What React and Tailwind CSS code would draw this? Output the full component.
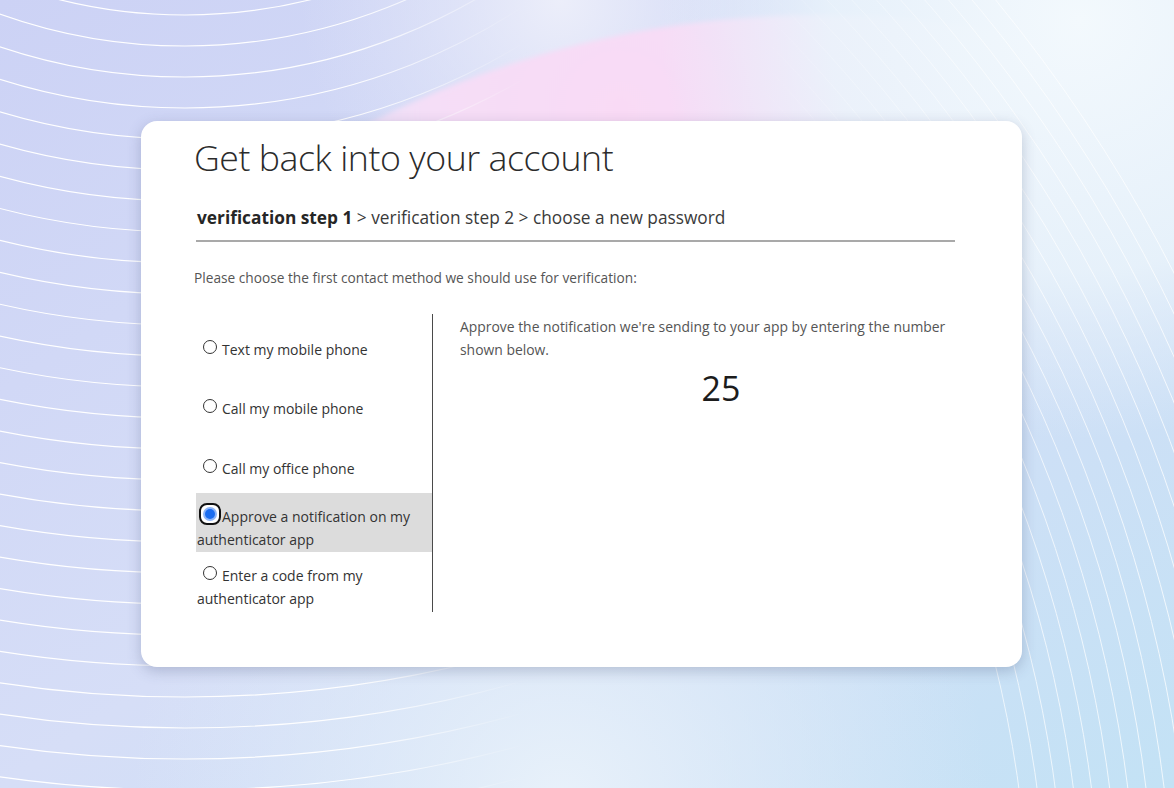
import React from "react";

const options = [
  { id: "sms", label: "Text my mobile phone", h: "h-[59px]" },
  { id: "call", label: "Call my mobile phone", h: "h-[60px]" },
  { id: "office", label: "Call my office phone", h: "h-[48px]" },
  { id: "push", label: "Approve a notification on my authenticator app", h: "h-[59px]" },
  { id: "code", label: "Enter a code from my authenticator app", h: "" },
];

// concentric rings behind the card
const ringsA = Array.from({ length: 27 }, (_, i) => 520 + i * 31);
const ringsB = Array.from({ length: 18 }, (_, i) => 1190 + i * 18);

const Backdrop = () => (
  <svg
    className="absolute inset-0 h-full w-full"
    viewBox="0 0 1174 788"
    preserveAspectRatio="none"
  >
    <defs>
      <linearGradient id="base" x1="0" y1="0" x2="1" y2="1">
        <stop offset="0" stopColor="#ccd2f5" />
        <stop offset="0.5" stopColor="#d6def7" />
        <stop offset="1" stopColor="#c3e2f5" />
      </linearGradient>
      <radialGradient id="haze" cx="560" cy="0" r="260" gradientUnits="userSpaceOnUse">
        <stop offset="0" stopColor="#eceefa" />
        <stop offset="1" stopColor="#e2e6f8" stopOpacity="0" />
      </radialGradient>
      <radialGradient id="glow" cx="1080" cy="20" r="420" gradientUnits="userSpaceOnUse">
        <stop offset="0" stopColor="#f3f9fd" />
        <stop offset="0.6" stopColor="#eaf4fb" stopOpacity="0.85" />
        <stop offset="1" stopColor="#e4f0fa" stopOpacity="0" />
      </radialGradient>
      <radialGradient id="pink" cx="620" cy="110" r="470" gradientUnits="userSpaceOnUse">
        <stop offset="0" stopColor="#f9daf5" />
        <stop offset="0.4" stopColor="#f5def7" />
        <stop offset="0.72" stopColor="#e9e5f8" stopOpacity="0.75" />
        <stop offset="1" stopColor="#dfe6f8" stopOpacity="0" />
      </radialGradient>
      <radialGradient id="floor" cx="560" cy="800" r="430" gradientUnits="userSpaceOnUse">
        <stop offset="0" stopColor="#e8f1fa" />
        <stop offset="1" stopColor="#e2ecf9" stopOpacity="0" />
      </radialGradient>
      <linearGradient id="fadeA" x1="0" y1="0" x2="1174" y2="0" gradientUnits="userSpaceOnUse">
        <stop offset="0" stopColor="#fff" stopOpacity="1" />
        <stop offset="0.3" stopColor="#fff" stopOpacity="0.95" />
        <stop offset="0.45" stopColor="#fff" stopOpacity="0" />
      </linearGradient>
      <linearGradient id="fadeB" x1="760" y1="0" x2="1174" y2="0" gradientUnits="userSpaceOnUse">
        <stop offset="0" stopColor="#fff" stopOpacity="0" />
        <stop offset="0.6" stopColor="#fff" stopOpacity="0.9" />
        <stop offset="1" stopColor="#fff" stopOpacity="1" />
      </linearGradient>
      <mask id="maskA">
        <rect width="1174" height="788" fill="url(#fadeA)" />
      </mask>
      <mask id="maskB">
        <rect width="1174" height="788" fill="url(#fadeB)" />
      </mask>
      <filter id="soft">
        <feGaussianBlur stdDeviation="2.5" />
      </filter>
    </defs>
    <rect width="1174" height="788" fill="url(#base)" />
    <rect width="1174" height="788" fill="url(#floor)" />
    <rect width="1174" height="788" fill="url(#haze)" />
    <circle cx="820" cy="1010" r="995" fill="url(#pink)" filter="url(#soft)" />
    <rect width="1174" height="788" fill="url(#glow)" />
    <g mask="url(#maskA)" fill="none" stroke="#ffffff" strokeWidth="1.2">
      {ringsA.map((r) => (
        <circle key={r} cx="185" cy="-505" r={r} />
      ))}
    </g>
    <g mask="url(#maskB)" fill="none" stroke="#ffffff" strokeWidth="1" opacity="0.75">
      {ringsB.map((r) => (
        <circle key={r} cx="-160" cy="950" r={r} />
      ))}
    </g>
  </svg>
);

const Radio = ({ checked }) =>
  checked ? (
    <span className="-my-[5px] ml-[2px] mr-[1px] inline-block h-[22px] w-[22px] rounded-[8px] border-2 border-[#111] bg-white align-[3px]">
      <span className="flex h-full w-full items-center justify-center">
        <span className="flex h-[14px] w-[14px] items-center justify-center rounded-full bg-[#8db4f7]">
          <span className="h-[10px] w-[10px] rounded-full bg-[#1a6cf0]" />
        </span>
      </span>
    </span>
  ) : (
    <span className="ml-[6px] mr-[5px] inline-block h-[14px] w-[14px] rounded-full border border-[#333] bg-white align-[1px]" />
  );

export default function App() {
  return (
    <div
      className="relative h-[788px] w-full overflow-hidden bg-[#d2dbf6]"
      style={{ fontFamily: '"Open Sans", "Noto Sans", sans-serif' }}
    >
      <Backdrop />
      <div className="relative pl-[141px] pt-[121px]">
        <div className="h-[546px] w-[881px] rounded-[16px] bg-white pl-[53px] pr-[67px] pt-[14px] shadow-[0_4px_14px_rgba(70,80,120,0.28)]">
          <h1 className="text-[35.7px] font-light leading-[44px] tracking-[-0.45px] text-[#2b2b2b]">
            Get back into your account
          </h1>

          <div className="ml-[2px] mt-[27px] border-b-2 border-[#a9a9a9] pb-[10px] pl-[1px] text-[17.3px] leading-[24px] text-[#3a3a3a]">
            <span className="font-bold text-[#262626]">verification step 1</span>
            {" > verification step 2 > choose a new password"}
          </div>

          <p className="mt-[26px] text-[13.7px] leading-[20px] text-[#555]">
            Please choose the first contact method we should use for verification:
          </p>

          <div className="ml-[2px] mt-[26px] flex">
            <div className="w-[237px] shrink-0 border-r-[1.5px] border-[#4a4a4a] pb-[2px] pt-[12px]">
              {options.map((o) => {
                const on = o.id === "push";
                return (
                  <div
                    key={o.id}
                    className={`${o.h} pt-3 ${on ? "bg-[#dcdcdc]" : ""}`}
                  >
                    <div className="pl-[1px] text-[14px] leading-[23px] text-[#333]">
                      <Radio checked={on} />
                      {o.label}
                    </div>
                  </div>
                );
              })}
            </div>

            <div className="flex-1 pl-[27px]">
              <p className="max-w-[495px] pt-[1px] text-[13.9px] leading-[23px] text-[#555]">
                Approve the notification we're sending to your app by entering the number shown below.
              </p>
              <div className="mt-[7px] w-[522px] text-center text-[34px] leading-[40px] text-[#1c1c1c]">
                25
              </div>
            </div>
          </div>
        </div>
      </div>
    </div>
  );
}
